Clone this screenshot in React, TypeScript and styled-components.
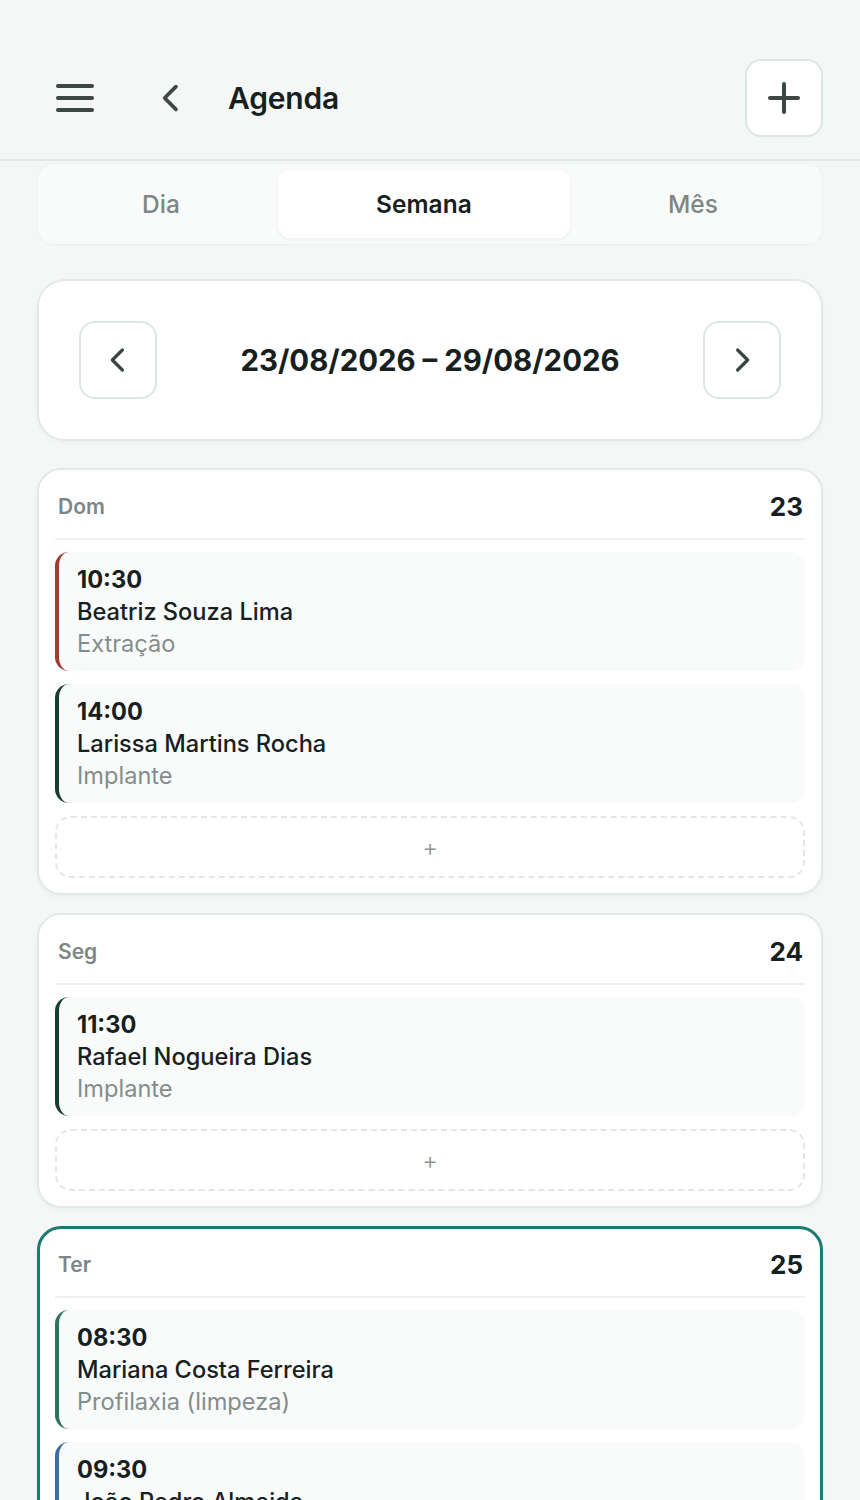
import { createGlobalStyle } from 'styled-components'
import styled from 'styled-components'

const GlobalStyle = createGlobalStyle`
  * { box-sizing: border-box; }
  body {
    margin: 0;
    background: #f4f7f6;
    font-family: Inter, "Noto Sans", sans-serif;
    color: #16201e;
  }
`

const Page = styled.div`
  min-height: 1500px;
  background: #f4f7f6;
`

const Header = styled.header`
  display: flex;
  align-items: center;
  height: 161px;
  padding: 36px 37px 0 54px;
  border-bottom: 2px solid #e1e8e6;
`

const IconButton = styled.button<{ $gap?: number }>`
  display: flex;
  align-items: center;
  justify-content: center;
  background: none;
  border: none;
  padding: 0;
  margin-left: ${p => p.$gap ?? 0}px;
  color: #3c4644;
  cursor: pointer;
`

const Title = styled.h1`
  margin: 0 0 0 40px;
  font-size: 30px;
  font-weight: 600;
  color: #16201e;
  letter-spacing: -0.2px;
  flex: 1;
`

const SquareButton = styled.button`
  width: 78px;
  height: 78px;
  border-radius: 16px;
  background: #fff;
  border: 2px solid #dde6e4;
  display: flex;
  align-items: center;
  justify-content: center;
  color: #3c4644;
  padding: 0;
  flex-shrink: 0;
  cursor: pointer;
`

const Content = styled.main`
  padding: 2px 37px 0;
`

const Tabs = styled.div`
  display: flex;
  padding: 6px;
  background: #f9fbfb;
  border: 1px solid #edf2f1;
  border-radius: 16px;
`

const Tab = styled.button<{ $active?: boolean }>`
  flex: 1 1 auto;
  height: 68px;
  border: none;
  border-radius: 12px;
  font-family: inherit;
  font-size: 24.5px;
  font-weight: ${p => (p.$active ? 600 : 500)};
  color: ${p => (p.$active ? '#16201e' : '#7c8785')};
  background: ${p => (p.$active ? '#fff' : 'transparent')};
  box-shadow: ${p => (p.$active ? '0 1px 3px rgba(20, 40, 35, 0.07)' : 'none')};
  cursor: pointer;
`

const RangeCard = styled.section`
  margin-top: 34px;
  display: flex;
  align-items: center;
  padding: 40px 40px;
  background: #fff;
  border: 2px solid #e2e9e7;
  border-radius: 28px;
  box-shadow: 0 2px 4px rgba(20, 40, 35, 0.04);
`

const RangeText = styled.div`
  flex: 1;
  text-align: center;
  font-size: 29.4px;
  font-weight: 700;
  color: #16201e;
`

const DayList = styled.div`
  margin-top: 27px;
  display: flex;
  flex-direction: column;
  gap: 18px;
`

const DayCard = styled.section<{ $today?: boolean }>`
  background: #fff;
  border: ${p => (p.$today ? '3px solid #1e7a70' : '2px solid #e2e9e7')};
  border-radius: 24px;
  padding: 0 ${p => (p.$today ? 15 : 16)}px 15px;
  box-shadow: 0 2px 4px rgba(20, 40, 35, 0.04);
`

const DayHeader = styled.div<{ $today?: boolean }>`
  display: flex;
  align-items: center;
  justify-content: space-between;
  height: ${p => (p.$today ? 69 : 70)}px;
  padding: 4px 2px 0 3px;
  border-bottom: 2px solid #edf1f0;
  margin-bottom: 12px;
`

const DayName = styled.span`
  font-size: 21px;
  font-weight: 600;
  color: #7c8785;
`

const DayNumber = styled.span`
  font-size: 26px;
  font-weight: 700;
  color: #16201e;
`

const Appointment = styled.div<{ $color: string }>`
  display: flex;
  flex-direction: column;
  padding: 12px 20px 11px 18px;
  background: #f9fbfb;
  border-left: 4px solid ${p => p.$color};
  border-radius: 14px;
  margin-bottom: 13px;
  font-size: 23.6px;
  line-height: 32px;
`

const Time = styled.span`
  font-weight: 700;
  color: #16201e;
`

const Patient = styled.span`
  font-weight: 500;
  color: #16201e;
`

const Procedure = styled.span`
  font-weight: 400;
  color: #838d8b;
`

const AddSlot = styled.button`
  width: 100%;
  height: 62px;
  background: #fff;
  border: 2px dashed #e1e7e6;
  border-radius: 16px;
  color: #8a9492;
  font-family: inherit;
  font-size: 24px;
  font-weight: 300;
  cursor: pointer;
`

type Appt = { time: string; patient: string; procedure: string; color: string }
type Day = { name: string; num: number; today?: boolean; appts: Appt[] }

const RED = '#a33b30'
const DARK = '#183b33'
const GREEN = '#2b735a'
const BLUE = '#3d6ea6'

const days: Day[] = [
  {
    name: 'Dom',
    num: 23,
    appts: [
      { time: '10:30', patient: 'Beatriz Souza Lima', procedure: 'Extração', color: RED },
      { time: '14:00', patient: 'Larissa Martins Rocha', procedure: 'Implante', color: DARK },
    ],
  },
  {
    name: 'Seg',
    num: 24,
    appts: [{ time: '11:30', patient: 'Rafael Nogueira Dias', procedure: 'Implante', color: DARK }],
  },
  {
    name: 'Ter',
    num: 25,
    today: true,
    appts: [
      { time: '08:30', patient: 'Mariana Costa Ferreira', procedure: 'Profilaxia (limpeza)', color: GREEN },
      { time: '09:30', patient: 'João Pedro Almeida', procedure: 'Avaliação', color: BLUE },
    ],
  },
]

const MenuIcon = () => (
  <svg width="42" height="30" viewBox="0 0 42 30" fill="none" stroke="currentColor" strokeWidth="4" strokeLinecap="round">
    <path d="M4 3h34M4 15h34M4 27h34" />
  </svg>
)

const Chevron = ({ dir, size, stroke }: { dir: 'left' | 'right'; size: number; stroke: number }) => (
  <svg width={size} height={size} viewBox="0 0 24 24" fill="none" stroke="currentColor" strokeWidth={stroke} strokeLinecap="round" strokeLinejoin="round">
    <path d={dir === 'left' ? 'M15.5 4 7.5 12l8 8' : 'M8.5 4l8 8-8 8'} />
  </svg>
)

const PlusIcon = () => (
  <svg width="34" height="34" viewBox="0 0 34 34" fill="none" stroke="currentColor" strokeWidth="4" strokeLinecap="round">
    <path d="M17 3v28M3 17h28" />
  </svg>
)

export default function App() {
  return (
    <Page>
      <GlobalStyle />
      <Header>
        <IconButton aria-label="Menu">
          <MenuIcon />
        </IconButton>
        <IconButton aria-label="Voltar" $gap={58}>
          <Chevron dir="left" size={34} stroke={2.6} />
        </IconButton>
        <Title>Agenda</Title>
        <SquareButton aria-label="Novo">
          <PlusIcon />
        </SquareButton>
      </Header>

      <Content>
        <Tabs>
          <Tab>Dia</Tab>
          <Tab $active>Semana</Tab>
          <Tab>Mês</Tab>
        </Tabs>

        <RangeCard>
          <SquareButton aria-label="Semana anterior">
            <Chevron dir="left" size={30} stroke={2.6} />
          </SquareButton>
          <RangeText>23/08/2026 – 29/08/2026</RangeText>
          <SquareButton aria-label="Próxima semana">
            <Chevron dir="right" size={30} stroke={2.6} />
          </SquareButton>
        </RangeCard>

        <DayList>
          {days.map(d => (
            <DayCard key={d.name} $today={d.today}>
              <DayHeader $today={d.today}>
                <DayName>{d.name}</DayName>
                <DayNumber>{d.num}</DayNumber>
              </DayHeader>
              {d.appts.map(a => (
                <Appointment key={a.time} $color={a.color}>
                  <Time>{a.time}</Time>
                  <Patient>{a.patient}</Patient>
                  <Procedure>{a.procedure}</Procedure>
                </Appointment>
              ))}
              <AddSlot aria-label="Adicionar">+</AddSlot>
            </DayCard>
          ))}
        </DayList>
      </Content>
    </Page>
  )
}
